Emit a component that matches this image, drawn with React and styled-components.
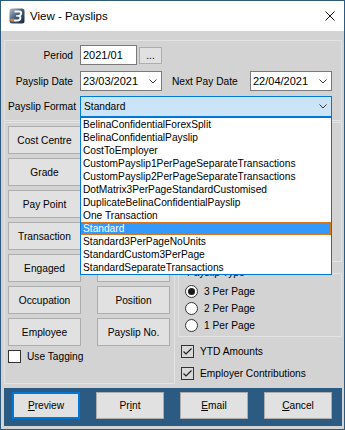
import React from 'react';
import styled, { createGlobalStyle } from 'styled-components';

const GlobalStyle = createGlobalStyle`
	html, body {
		margin: 0;
		padding: 0;
		background: #ffffff;
	}
	body {
		font-family: "Liberation Sans", Arial, sans-serif;
	}
	* {
		box-sizing: border-box;
	}
`;

const Window = styled.div`
	width: 345px;
	height: 430px;
	border: 1px solid #2f5a7e;
	background: #d3d3d3;
	display: flex;
	flex-direction: column;
	font-size: 10.2px;
	color: #000;
`;

const TitleBar = styled.div`
	height: 30px;
	flex-shrink: 0;
	background: #ffffff;
	display: flex;
	align-items: center;
	padding: 0 9px 0 8px;
`;

const TitleText = styled.div`
	flex: 1;
	margin-left: 5px;
	font-size: 11.5px;
	color: #000;
`;

const Body = styled.div`
	display: flex;
	flex-direction: column;
	padding: 9px 2px 4px 3px;
`;

const GroupBox = styled.div`
	border: 1px solid #e3e3e3;
	position: relative;
`;

const TopGroup = styled(GroupBox)`
	display: flex;
	flex-direction: column;
	padding: 4px 0 3px 0;
`;

const Row = styled.div`
	display: flex;
	align-items: center;
	height: ${(p) => p.$h || 20}px;
	margin-top: ${(p) => p.$mt || 0}px;
`;

const FieldLabel = styled.div`
	width: 71px;
	margin-right: 4px;
	padding-right: ${(p) => p.$pr || 0}px;
	text-align: right;
	white-space: nowrap;
`;

const NextLabel = styled.div`
	width: 78px;
	margin-left: 10px;
	white-space: nowrap;
`;

const TextBox = styled.div`
	width: ${(p) => p.$w}px;
	height: 20px;
	background: #ffffff;
	border: 1px solid #7a7a7a;
	display: flex;
	align-items: center;
	justify-content: space-between;
	padding: 0 4px 0 2px;
	font-size: 11px;
`;

const DotsButton = styled.div`
	width: 23px;
	height: 17px;
	margin-left: 2px;
	background: #e1e1e1;
	border: 1px solid #adadad;
	display: flex;
	align-items: flex-end;
	justify-content: center;
	padding-bottom: 2px;
	font-size: 10px;
	line-height: 10px;
`;

const Combo = styled.div`
	position: relative;
	width: 252px;
	height: 21px;
	background: #cce4f7;
	border: 1px solid #0078d7;
	display: flex;
	align-items: center;
	justify-content: space-between;
	padding: 0 4px 0 3px;
`;

const DropList = styled.div`
	position: absolute;
	top: calc(100% + 1px);
	left: -1px;
	right: -1px;
	z-index: 10;
	background: #ffffff;
	border: 1px solid #0078d7;
`;

const DropItem = styled.div`
	height: 13px;
	line-height: ${(p) => (p.$selected ? 11 : 13)}px;
	padding-left: ${(p) => (p.$selected ? 1 : 2)}px;
	white-space: nowrap;
	background: ${(p) => (p.$selected ? '#3399ff' : 'transparent')};
	color: ${(p) => (p.$selected ? '#ffffff' : '#000')};
	border: ${(p) => (p.$selected ? '1px dotted #e07a1f' : 'none')};
`;

const Lower = styled.div`
	display: flex;
	gap: 3px;
	height: 262px;
	margin-top: 1px;
`;

const SortGroup = styled(GroupBox)`
	width: 171px;
	padding: 3px 3px 0 3px;
`;

const ButtonGrid = styled.div`
	display: grid;
	grid-template-columns: 73px 73px;
	column-gap: 16px;
	row-gap: 4px;
`;

const WinButton = styled.div`
	height: ${(p) => p.$h || 28}px;
	width: ${(p) => (p.$w ? `${p.$w}px` : 'auto')};
	background: #e1e1e1;
	border: ${(p) => (p.$default ? '2px solid #0078d7' : '1px solid #adadad')};
	display: flex;
	align-items: center;
	justify-content: center;
	white-space: nowrap;
	u {
		text-decoration: underline;
		text-underline-offset: 1px;
	}
`;

const CheckRow = styled.div`
	display: flex;
	align-items: center;
	height: ${(p) => p.$h || 16}px;
	margin-top: ${(p) => p.$mt || 0}px;
	gap: 6px;
	white-space: nowrap;
`;

const CheckBox = styled.div`
	width: 13px;
	height: 13px;
	flex-shrink: 0;
	border: 1px solid #333333;
	background: ${(p) => (p.$checked ? '#d9d9d9' : '#ffffff')};
	display: flex;
	align-items: center;
	justify-content: center;
`;

const RightCol = styled.div`
	width: 164px;
	display: flex;
	flex-direction: column;
`;

const OptionsGroup = styled(GroupBox)`
	height: 140px;
`;

const FieldSet = styled.fieldset`
	margin: 5px 0 0 0;
	padding: 4px 6px 2px 6px;
	border: 1px solid #e3e3e3;
	min-width: 0;
`;

const Legend = styled.legend`
	padding: 0 2px;
	line-height: 12px;
	font-size: 10.2px;
`;

const RadioRow = styled.div`
	display: flex;
	align-items: center;
	height: 17px;
	gap: 6px;
`;

const RadioCircle = styled.div`
	width: 13px;
	height: 13px;
	border-radius: 50%;
	border: 1px solid #333333;
	background: #ffffff;
	display: flex;
	align-items: center;
	justify-content: center;
	&::after {
		content: '';
		width: 7px;
		height: 7px;
		border-radius: 50%;
		background: ${(p) => (p.$checked ? '#1a1a1a' : 'transparent')};
	}
`;

const RightChecks = styled.div`
	padding-left: 3px;
	display: flex;
	flex-direction: column;
`;

const ActionStrip = styled.div`
	height: 38px;
	margin: 0 2px 0 3px;
	background: #2b5a82;
	display: flex;
	align-items: flex-start;
	justify-content: space-between;
	padding: 4px 10px 0 8px;
`;

const Chevron = () => (
	<svg width="8" height="5" viewBox="0 0 8 5">
		<polyline points="0.5,0.5 4,4 7.5,0.5" fill="none" stroke="#333" strokeWidth="1" />
	</svg>
);

const CheckMark = () => (
	<svg width="11" height="11" viewBox="0 0 11 11">
		<polyline points="1.5,5.5 4,8 9.5,2.5" fill="none" stroke="#222" strokeWidth="1.2" />
	</svg>
);

const AppIcon = () => (
	<svg width="16" height="16" viewBox="0 0 16 16">
		<defs>
			<linearGradient id="iconBg" x1="0" y1="0" x2="1" y2="1">
				<stop offset="0" stopColor="#b3bfcc" />
				<stop offset="0.45" stopColor="#4b6480" />
				<stop offset="1" stopColor="#14243a" />
			</linearGradient>
		</defs>
		<rect x="0.5" y="0.5" width="15" height="15" rx="2.5" fill="url(#iconBg)" />
		<path
			d="M5.5 3.5 H10.5 Q12.6 3.6 12 6 Q11.6 7.5 9.8 7.9 Q11.8 8.4 11.3 10.6 Q10.8 12.5 8.4 12.5 H4.5"
			fill="none"
			stroke="#ffffff"
			strokeWidth="1.9"
		/>
		<path d="M7.2 7.9 H10" stroke="#ffffff" strokeWidth="1.6" />
		<path d="M1.5 10.8 H5.2 L4.3 13.2 H1.5 Z" fill="#e8832a" />
	</svg>
);

const CloseIcon = () => (
	<svg width="10" height="10" viewBox="0 0 10 10">
		<line x1="0.5" y1="0.5" x2="9.5" y2="9.5" stroke="#111" strokeWidth="1" />
		<line x1="9.5" y1="0.5" x2="0.5" y2="9.5" stroke="#111" strokeWidth="1" />
	</svg>
);

const formats = [
	'BelinaConfidentialForexSplit',
	'BelinaConfidentialPayslip',
	'CostToEmployer',
	'CustomPayslip1PerPageSeparateTransactions',
	'CustomPayslip2PerPageSeparateTransactions',
	'DotMatrix3PerPageStandardCustomised',
	'DuplicateBelinaConfidentialPayslip',
	'One Transaction',
	'Standard',
	'Standard3PerPageNoUnits',
	'StandardCustom3PerPage',
	'StandardSeparateTransactions',
];

const sortButtons = [
	['Cost Centre', 'Department'],
	['Grade', 'Notch'],
	['Pay Point', 'Region'],
	['Transaction', 'Branch'],
	['Engaged', 'Designation'],
	['Occupation', 'Position'],
	['Employee', 'Payslip No.'],
];

const App = () => {
	const selected = 'Standard';

	return (
		<>
			<GlobalStyle />
			<Window>
				<TitleBar>
					<AppIcon />
					<TitleText>View - Payslips</TitleText>
					<CloseIcon />
				</TitleBar>

				<Body>
					<TopGroup>
						<Row>
							<FieldLabel $pr={3}>Period</FieldLabel>
							<TextBox $w={57}>2021/01</TextBox>
							<DotsButton>...</DotsButton>
						</Row>
						<Row $mt={6}>
							<FieldLabel $pr={3}>Payslip Date</FieldLabel>
							<TextBox $w={82}>
								23/03/2021
								<Chevron />
							</TextBox>
							<NextLabel>Next Pay Date</NextLabel>
							<TextBox $w={82}>
								22/04/2021
								<Chevron />
							</TextBox>
						</Row>
						<Row $h={21} $mt={5}>
							<FieldLabel>Payslip Format</FieldLabel>
							<Combo>
								{selected}
								<Chevron />
								<DropList>
									{formats.map((f) => (
										<DropItem key={f} $selected={f === selected}>
											{f}
										</DropItem>
									))}
								</DropList>
							</Combo>
						</Row>
					</TopGroup>

					<Lower>
						<SortGroup>
							<ButtonGrid>
								{sortButtons.flat().map((label) => (
									<WinButton key={label}>{label}</WinButton>
								))}
							</ButtonGrid>
							<CheckRow $h={13} $mt={4}>
								<CheckBox />
								Use Tagging
							</CheckRow>
						</SortGroup>

						<RightCol>
							<OptionsGroup />
							<FieldSet>
								<Legend>Payslip Type</Legend>
								<RadioRow>
									<RadioCircle $checked />3 Per Page
								</RadioRow>
								<RadioRow>
									<RadioCircle />2 Per Page
								</RadioRow>
								<RadioRow>
									<RadioCircle />1 Per Page
								</RadioRow>
							</FieldSet>
							<RightChecks>
								<CheckRow $mt={6}>
									<CheckBox $checked>
										<CheckMark />
									</CheckBox>
									YTD Amounts
								</CheckRow>
								<CheckRow $mt={6}>
									<CheckBox $checked>
										<CheckMark />
									</CheckBox>
									Employer Contributions
								</CheckRow>
							</RightChecks>
						</RightCol>
					</Lower>
				</Body>

				<ActionStrip>
					<WinButton $w={68} $h={27} $default>
						<span><u>P</u>review</span>
					</WinButton>
					<WinButton $w={68} $h={27}>
						<span>Pr<u>i</u>nt</span>
					</WinButton>
					<WinButton $w={68} $h={27}>
						<span><u>E</u>mail</span>
					</WinButton>
					<WinButton $w={68} $h={27}>
						<span><u>C</u>ancel</span>
					</WinButton>
				</ActionStrip>
			</Window>
		</>
	);
};

export default App;
